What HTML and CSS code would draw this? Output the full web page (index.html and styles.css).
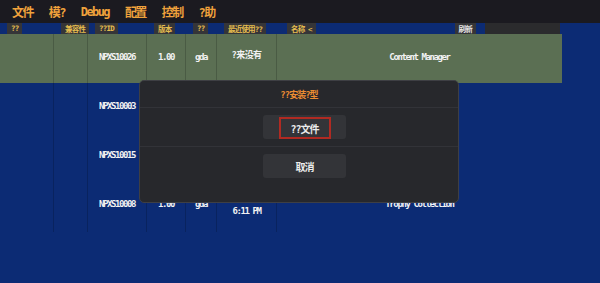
FILE: index.html
```html
<html lang="zh">
<head>
    <meta charset="UTF-8">
    <meta name="viewport" content="width=device-width, initial-scale=1.0">
    <title>Content Manager</title>
    <link rel="stylesheet" href="styles.css">
</head>
<body>
    <div class="menubar">
        <span>文件</span>
        <span>模?</span>
        <span>Debug</span>
        <span>配置</span>
        <span>控制</span>
        <span>?助</span>
    </div>

    <div class="list">
        <div class="thead">
            <div class="th"><span class="label">??</span></div>
            <div class="th"><span class="label">兼容性</span></div>
            <div class="th"><span class="label">??ID</span></div>
            <div class="th"><span class="label">版本</span></div>
            <div class="th"><span class="label">??</span></div>
            <div class="th"><span class="label">最近使用??</span></div>
            <div class="th th-name">
                <span class="label">名称 &lt;</span>
                <span class="label refresh">刷新</span>
                <span class="search"></span>
            </div>
        </div>

        <div class="row selected">
            <div class="cell"></div>
            <div class="cell"></div>
            <div class="cell">NPXS10026</div>
            <div class="cell">1.00</div>
            <div class="cell">gda</div>
            <div class="cell cjk">?来没有</div>
            <div class="cell">Content Manager</div>
        </div>
        <div class="row">
            <div class="cell"></div>
            <div class="cell"></div>
            <div class="cell">NPXS10003</div>
            <div class="cell">1.00</div>
            <div class="cell">gda</div>
            <div class="cell cjk">?来没有</div>
            <div class="cell">Web Browser</div>
        </div>
        <div class="row">
            <div class="cell"></div>
            <div class="cell"></div>
            <div class="cell">NPXS10015</div>
            <div class="cell">1.00</div>
            <div class="cell">gda</div>
            <div class="cell cjk">?来没有</div>
            <div class="cell">Settings</div>
        </div>
        <div class="row">
            <div class="cell"></div>
            <div class="cell"></div>
            <div class="cell">NPXS10008</div>
            <div class="cell">1.00</div>
            <div class="cell">gda</div>
            <div class="cell two-line">2023/08/15<br>6:11 PM</div>
            <div class="cell">Trophy Collection</div>
        </div>
    </div>

    <!-- install type dialog -->
    <div class="dialog">
        <div class="dialog-title">??安装?型</div>
        <div class="dialog-section">
            <button class="dialog-btn"><span class="focus">??文件</span></button>
        </div>
        <div class="dialog-section last">
            <button class="dialog-btn">取消</button>
        </div>
    </div>
</body>
</html>
```

FILE: styles.css
```css
body {
    margin: 0;
    width: 600px;
    height: 283px;
    overflow: hidden;
    background-color: #0c2b74;
    font-family: "DejaVu Sans Mono", "Noto Sans CJK SC", monospace;
    font-weight: bold;
}
.menubar {
    height: 23px;
    display: flex;
    align-items: center;
    gap: 16px;
    padding-left: 12px;
    background-color: #1b1a20;
    color: #f0a23c;
    font-size: 12px;
    letter-spacing: -1.6px;
}
.thead {
    height: 11px;
    display: grid;
    grid-template-columns: 54px 34px 59px 39px 31px 60px 285px;
    font-size: 7.5px;
    letter-spacing: -0.8px;
    white-space: nowrap;
}
.th {
    display: flex;
    padding-left: 7px;
}
.label {
    display: flex;
    align-items: center;
    height: 11px;
    padding: 0 4px;
    background-color: #353538;
    color: #e6bd4e;
}
.th-name {
    padding-left: 10px;
}
.refresh {
    margin-left: auto;
    color: #e4e4e4;
}
.search {
    width: 75px;
    height: 11px;
    margin: 0 2px 0 9px;
    background-color: #2b2b2d;
}
.row {
    width: 562px;
    min-height: 49px;
    display: grid;
    grid-template-columns: 54px 34px 59px 39px 31px 60px 285px;
    color: #f2f2f2;
    font-size: 9px;
    letter-spacing: -1.4px;
    line-height: 12px;
    white-space: nowrap;
}
.row.selected {
    background-color: #5b6f53;
}
.cell {
    padding: 17px 0 15px;
    text-align: center;
    border-right: 1px solid rgba(0, 0, 0, 0.18);
}
.cell:last-child {
    border-right: none;
}
.cell.cjk {
    letter-spacing: -0.6px;
    padding-top: 15px;
}
.cell.two-line {
    padding-top: 12px;
}
.dialog {
    position: absolute;
    left: 139px;
    top: 80px;
    width: 318px;
    height: 121px;
    display: flex;
    flex-direction: column;
    background-color: #27282c;
    border: 1px solid #3e3f44;
    border-radius: 5px;
}
.dialog-title {
    height: 26px;
    display: flex;
    align-items: center;
    justify-content: center;
    color: #ec8d32;
    font-size: 9px;
    letter-spacing: -1px;
    border-bottom: 1px solid #323338;
}
.dialog-section {
    padding: 7px 0 7px 123px;
    border-bottom: 1px solid #323338;
}
.dialog-section.last {
    border-bottom: none;
}
.dialog-btn {
    width: 83px;
    height: 24px;
    display: flex;
    align-items: center;
    justify-content: center;
    padding: 0;
    border: none;
    border-radius: 3px;
    background-color: #333438;
    color: #ececec;
    font-family: inherit;
    font-weight: bold;
    font-size: 10px;
    letter-spacing: -1px;
}
.focus {
    width: 48px;
    height: 18px;
    margin-top: 2px;
    display: flex;
    align-items: center;
    justify-content: center;
    border: 2px solid #b02a22;
}
```
